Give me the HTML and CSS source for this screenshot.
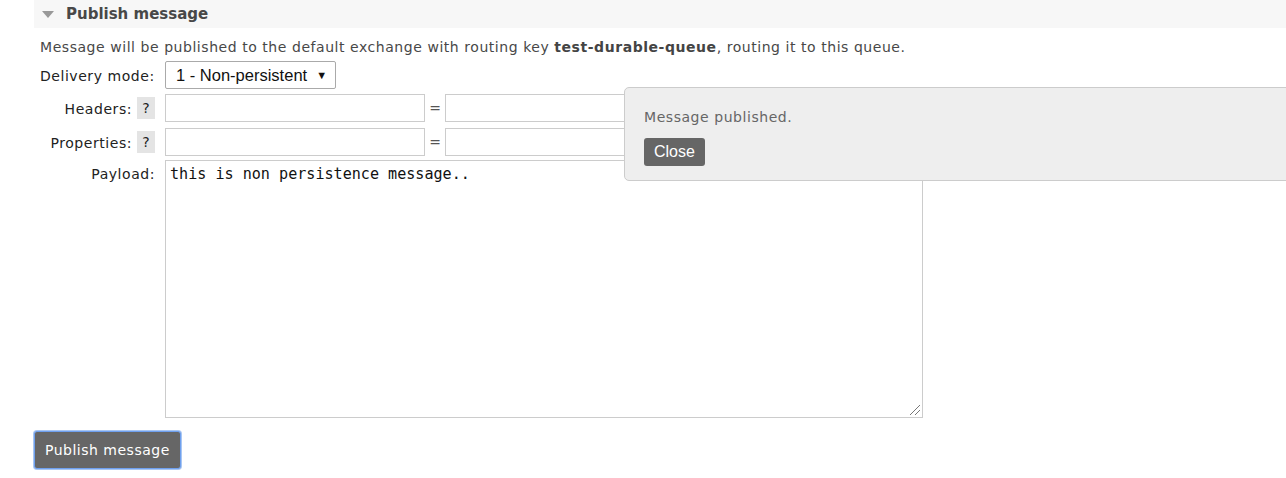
FILE: index.html
```html
<!DOCTYPE html>
<html>
<head>
<meta charset="utf-8">
<link rel="stylesheet" href="styles.css">
</head>
<body>
<div class="section">
  <div class="section-head">
    <span class="tri"></span>
    <span class="section-title">Publish message</span>
  </div>
  <div class="section-body">
    <p class="intro">Message will be published to the default exchange with routing key <b>test-durable-queue</b>, routing it to this queue.</p>
    <div class="form">
      <div class="label first">Delivery mode:</div>
      <div class="field">
        <div class="select">1 - Non-persistent <span class="caret">▼</span></div>
      </div>

      <div class="label r2">Headers: <span class="help">?</span></div>
      <div class="field pair r2">
        <div class="input key"></div>
        <span class="eq">=</span>
        <div class="input val"></div>
      </div>

      <div class="label r3">Properties: <span class="help">?</span></div>
      <div class="field pair r3">
        <div class="input key"></div>
        <span class="eq">=</span>
        <div class="input val"></div>
      </div>

      <div class="label payload-label r4">Payload:</div>
      <div class="field r4">
        <div class="textarea">this is non persistence message..<span class="grip"></span></div>
      </div>
    </div>
    <button class="btn publish">Publish message</button>
  </div>
</div>

<div class="toast">
  <p class="toast-text">Message published.</p>
  <button class="btn close">Close</button>
</div>
</body>
</html>
```

FILE: styles.css
```css
html, body {
  margin: 0;
  padding: 0;
  background: #fff;
}
body {
  font-family: "DejaVu Sans", Verdana, sans-serif;
  font-size: 14px;
  letter-spacing: 0.55px;
  color: #444;
  width: 1286px;
  height: 478px;
  overflow: hidden;
  position: relative;
}
.section {
  margin-left: 34px;
}
.section-head {
  height: 28px;
  background: #f7f7f7;
  display: flex;
  align-items: center;
}
.tri {
  width: 0;
  height: 0;
  border-left: 6px solid transparent;
  border-right: 6px solid transparent;
  border-top: 7px solid #999;
  margin-left: 8px;
  margin-right: 12px;
  margin-top: 1px;
}
.section-title {
  font-weight: bold;
  font-size: 15px;
  letter-spacing: 0;
  color: #484848;
}
.section-body {
  padding-left: 6px;
}
.intro {
  margin: 9px 0 4px 0;
  line-height: 20px;
  color: #484848;
}
.intro b {
  color: #444;
}
.form {
  display: grid;
  grid-template-columns: 115px auto;
  column-gap: 10px;
  color: #222;
}
.r2 { margin-top: 5px; }
.r3 { margin-top: 6px; }
.r4 { margin-top: 4px; }
.label {
  display: flex;
  align-items: center;
  justify-content: flex-end;
  height: 28px;
  padding-top: 2px;
  box-sizing: border-box;
  color: #222;
  white-space: nowrap;
}
.label.first {
  justify-content: flex-start;
}
.label.payload-label {
  align-items: flex-start;
  height: auto;
  padding-top: 6px;
}
.help {
  display: inline-flex;
  align-items: center;
  justify-content: center;
  width: 18px;
  height: 22px;
  margin-top: -2px;
  background: #e4e4e4;
  margin-left: 5px;
  letter-spacing: 0;
}
.field {
  display: flex;
  align-items: center;
}
.select {
  box-sizing: border-box;
  height: 28px;
  border: 1px solid #aaa;
  border-radius: 2px;
  padding: 0 8px 0 10px;
  display: flex;
  align-items: center;
  font-family: "Liberation Sans", Arial, sans-serif;
  font-size: 16.5px;
  letter-spacing: 0;
  color: #111;
  background: #fff;
}
.caret {
  font-size: 11px;
  margin-left: 9px;
}
.pair .input {
  height: 26px;
  border: 1px solid #ccc;
}
.input.key {
  width: 258px;
}
.input.val {
  width: 400px;
}
.eq {
  width: 20px;
  text-align: center;
  color: #555;
  letter-spacing: 0;
}
.textarea {
  position: relative;
  width: 748px;
  height: 250px;
  border: 1px solid #ccc;
  padding: 3px 4px;
  font-family: "DejaVu Sans Mono", "Liberation Mono", monospace;
  font-size: 15.1px;
  letter-spacing: 0;
  color: #111;
  line-height: 20px;
}
.grip {
  position: absolute;
  right: 2px;
  bottom: 2px;
  width: 10px;
  height: 10px;
  background: linear-gradient(135deg, transparent 45%, #777 45%, #777 52%, transparent 52%, transparent 70%, #777 70%, #777 77%, transparent 77%);
}
.btn {
  font-family: "DejaVu Sans", Verdana, sans-serif;
  background: #666;
  color: #fff;
  border: none;
  border-radius: 3px;
  cursor: pointer;
}
.publish {
  margin-top: 13px;
  margin-left: -6px;
  height: 38px;
  padding: 0 10px;
  font-size: 14px;
  letter-spacing: 0.5px;
  border: 1px solid #6fa0ee;
  box-shadow: 0 0 0 1px #a8c6f3;
}
.toast {
  position: absolute;
  left: 624px;
  top: 87px;
  width: 680px;
  height: 94px;
  background: #eee;
  border: 1px solid #ccc;
  border-radius: 5px;
  padding: 0 0 0 19px;
  box-sizing: border-box;
}
.toast-text {
  margin: 19px 0 11px 0;
  color: #666;
  line-height: 20px;
}
.close {
  height: 28px;
  padding: 0 10px;
  font-family: "Liberation Sans", Arial, sans-serif;
  font-size: 16px;
  letter-spacing: 0;
}
```
